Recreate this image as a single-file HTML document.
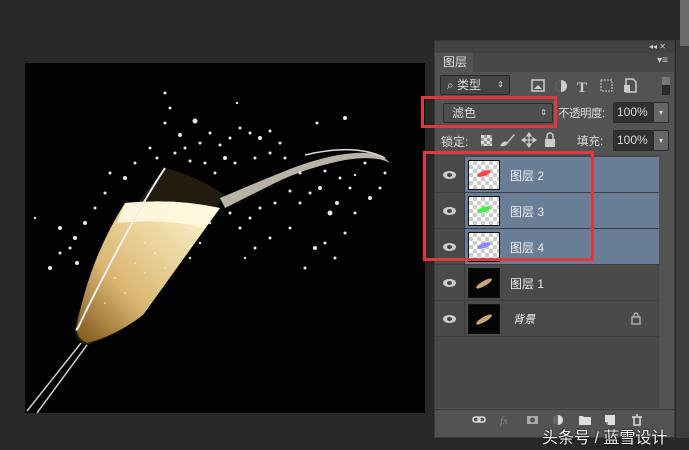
<!DOCTYPE html>
<html><head><meta charset="utf-8"><style>
*{margin:0;padding:0;box-sizing:border-box}
body{width:689px;height:450px;background:#282828;position:relative;overflow:hidden;font-family:"Liberation Sans","Noto Sans CJK SC",sans-serif;color:#ddd;font-size:12px}
.abs{position:absolute}
.canvas{left:25px;top:63px;width:400px;height:350px;background:#020202;overflow:hidden}
.panel{left:434px;top:40px;width:241px;height:398px;background:#535353;border:1px solid #3a3a3a}
.row{position:absolute;left:0;width:224px;height:36px;border-bottom:1px solid #3e3e3e;background:#4a4a4a}
.row.sel{background:#6a7d97}
.eye{position:absolute;left:0;top:0;width:30px;height:35px;border-right:1px solid #3c3c3c;background:#4a4a4a}
.eye:after{content:"";position:absolute;left:8px;top:14px;width:13px;height:8px;border-radius:50%;background:#ccc}
.eye:before{content:"";position:absolute;left:12px;top:16px;width:5px;height:4px;border-radius:50%;background:#444;z-index:2}
.th{position:absolute;left:33px;top:3px;width:32px;height:30px;border:1px solid #111;background-color:#fff;background-image:linear-gradient(45deg,#ccc 25%,transparent 25%,transparent 75%,#ccc 75%),linear-gradient(45deg,#ccc 25%,transparent 25%,transparent 75%,#ccc 75%);background-size:8px 8px;background-position:0 0,4px 4px}
.th.dark{background:#050505}
.nm{position:absolute;left:75px;top:10px;color:#eee;font-size:12px}
.red{position:absolute;border:3px solid #e0393b}
.btn{position:absolute;background:#3a3a3a;border:1px solid #2a2a2a;border-radius:2px;color:#ddd}
</style></head><body>
<div class="abs canvas">
<svg width="400" height="350">
<defs><linearGradient id="g" x1="0" y1="1" x2="1" y2="0"><stop offset="0" stop-color="#7a5418"/><stop offset=".35" stop-color="#d9b570"/><stop offset=".8" stop-color="#f6e6b8"/><stop offset="1" stop-color="#fffbe8"/></linearGradient></defs>
<path d="M140 105 Q170 112 200 132 L120 250 Q95 272 62 282 Q48 278 50 262 Q70 190 140 105Z" fill="#3a2d1a" opacity=".6"/>
<path d="M100 140 Q150 135 195 145 L118 252 Q92 272 62 280 Q50 275 52 262 Q65 195 100 140Z" fill="url(#g)"/>
<path d="M100 140 Q150 135 195 145 L180 165 Q140 155 92 160Z" fill="#fff8e0" opacity=".9"/>
<path d="M140 105 Q110 150 60 250 Q50 272 52 265" stroke="#eee" stroke-width="2" fill="none"/>
<path d="M56 280 L2 348 M62 282 L12 350" stroke="#ccc" stroke-width="1.5"/>
<path d="M195 135 Q230 120 260 108 Q300 92 330 90 Q355 88 365 100 Q350 92 320 97 Q280 105 250 120 Q220 135 200 145Z" fill="#e6e0d0" opacity=".8"/>
<path d="M280 92 Q330 80 360 95" stroke="#ddd" stroke-width="1.5" fill="none"/>
<g fill="#e8e8e8">
<circle cx="140" cy="30" r="1.5"/><circle cx="145" cy="45" r="1.5"/><circle cx="170" cy="58" r="2.5"/><circle cx="155" cy="72" r="2"/><circle cx="140" cy="60" r="1.5"/><circle cx="125" cy="85" r="1.5"/><circle cx="132" cy="95" r="1.5"/><circle cx="110" cy="100" r="1.5"/><circle cx="100" cy="115" r="2"/><circle cx="85" cy="110" r="1.5"/><circle cx="80" cy="130" r="1.5"/><circle cx="70" cy="145" r="1.5"/><circle cx="60" cy="160" r="2"/><circle cx="50" cy="175" r="2"/><circle cx="35" cy="165" r="2"/><circle cx="25" cy="205" r="2"/><circle cx="35" cy="190" r="1.5"/><circle cx="10" cy="155" r="1.2"/><circle cx="52" cy="200" r="2"/><circle cx="45" cy="185" r="1.5"/>
<circle cx="160" cy="85" r="1.5"/><circle cx="175" cy="80" r="1.5"/><circle cx="185" cy="70" r="1.5"/><circle cx="195" cy="82" r="1.5"/><circle cx="205" cy="75" r="1.5"/><circle cx="215" cy="65" r="1.5"/><circle cx="225" cy="70" r="1.5"/><circle cx="235" cy="75" r="2"/><circle cx="245" cy="68" r="1.5"/><circle cx="255" cy="80" r="1.5"/><circle cx="200" cy="95" r="2"/><circle cx="180" cy="100" r="1.5"/><circle cx="165" cy="98" r="1.5"/><circle cx="150" cy="90" r="1.5"/><circle cx="190" cy="110" r="1.5"/><circle cx="210" cy="100" r="1.5"/><circle cx="230" cy="95" r="1.5"/><circle cx="245" cy="90" r="1.5"/><circle cx="260" cy="95" r="1.5"/><circle cx="292" cy="60" r="1.5"/><circle cx="320" cy="55" r="2"/><circle cx="212" cy="40" r="1.2"/>
<circle cx="205" cy="150" r="1.5"/><circle cx="215" cy="165" r="1.5"/><circle cx="225" cy="155" r="1.5"/><circle cx="235" cy="145" r="1.5"/><circle cx="250" cy="140" r="1.5"/><circle cx="265" cy="128" r="1.5"/><circle cx="275" cy="140" r="1.5"/><circle cx="285" cy="130" r="1.5"/><circle cx="295" cy="125" r="2"/><circle cx="305" cy="150" r="2.5"/><circle cx="312" cy="140" r="2"/><circle cx="325" cy="125" r="1.5"/><circle cx="330" cy="150" r="1.5"/><circle cx="345" cy="135" r="2"/><circle cx="355" cy="125" r="1.5"/><circle cx="360" cy="110" r="1.5"/><circle cx="300" cy="180" r="1.5"/><circle cx="310" cy="195" r="1.5"/><circle cx="280" cy="205" r="1.5"/><circle cx="290" cy="185" r="2"/><circle cx="320" cy="170" r="1.5"/><circle cx="265" cy="165" r="1.5"/><circle cx="245" cy="175" r="1.5"/><circle cx="230" cy="185" r="1.5"/><circle cx="220" cy="195" r="1.2"/><circle cx="275" cy="110" r="1.5"/><circle cx="300" cy="108" r="1.5"/><circle cx="315" cy="115" r="1.5"/><circle cx="340" cy="100" r="1.5"/><circle cx="330" cy="112" r="1.2"/>
<circle cx="185" cy="160" r="1.2"/><circle cx="175" cy="180" r="1.2"/><circle cx="165" cy="195" r="1.2"/>
</g>
<g fill="#fff" opacity=".5"><circle cx="110" cy="200" r="1"/><circle cx="120" cy="210" r="1"/><circle cx="130" cy="190" r="1"/><circle cx="100" cy="230" r="1"/><circle cx="140" cy="205" r="1"/><circle cx="90" cy="215" r="1"/><circle cx="120" cy="180" r="1"/><circle cx="80" cy="240" r="1"/></g>
</svg>
</div>
<div class="abs" style="left:676px;top:40px;width:13px;height:398px;background:#3c3c3c"></div>
<div class="abs" style="left:680px;top:0;width:9px;height:46px;background:#6a6a6a"></div>
<div class="abs panel">
<div class="abs" style="left:0;top:0;width:239px;height:12px;background:#424242;color:#ccc;font-size:8px;text-align:right;padding-right:8px;line-height:12px">◂◂ ✕</div>
<div class="abs" style="left:0;top:12px;width:239px;height:19px;background:#474747"></div>
<div class="abs" style="left:0;top:12px;width:38px;height:19px;background:#535353;font-size:12px;line-height:19px;padding-left:8px;color:#ddd">图层</div>
<div class="abs" style="right:6px;top:14px;font-size:10px;color:#ccc">▾≡</div>
<div class="btn" style="left:5px;top:34px;width:70px;height:20px;line-height:18px;padding-left:6px;background:#444">⌕ 类型<span style="position:absolute;right:5px;font-size:8px">⇕</span></div>
<svg class="abs" style="left:96px;top:36px" width="115" height="18">
<rect x="1" y="3" width="12" height="11" fill="none" stroke="#ccc" stroke-width="1.5"/><path d="M3 12 L7 8 L11 12Z" fill="#ccc"/>
<circle cx="30" cy="9" r="6" fill="#ccc"/><path d="M30 3 A6 6 0 0 0 30 15Z" fill="#555"/>
<text x="46" y="15" fill="#ccc" font-size="15" font-family="Liberation Serif" font-weight="bold">T</text>
<rect x="70" y="3" width="11" height="11" fill="none" stroke="#ccc" stroke-dasharray="2 1"/>
<path d="M95 2 L102 2 L105 5 L105 15 L95 15Z" fill="none" stroke="#ccc" stroke-width="1.5"/><rect x="93" y="8" width="6" height="7" fill="#ccc"/>
</svg>
<div class="abs" style="left:227px;top:36px;width:8px;height:18px;background:#2a2a2a"><div style="height:8px;background:#777"></div></div>
<div class="btn" style="left:8px;top:62px;width:110px;height:20px;line-height:18px;padding-left:8px;background:#4e4e4e">滤色<span style="position:absolute;right:5px;font-size:8px">⇕</span></div>
<div class="abs" style="left:123px;top:64px;color:#ddd;font-size:11.5px;letter-spacing:-0.5px">不透明度:</div>
<div class="btn" style="left:178px;top:61px;width:40px;height:21px;line-height:19px;padding-left:3px;background:#303030">100%</div>
<div class="btn" style="left:218px;top:61px;width:16px;height:21px;background:#666;font-size:8px;text-align:center;line-height:19px">▾</div>
<div class="abs" style="left:6px;top:92px;color:#ddd">锁定:</div>
<div class="abs" style="left:46px;top:94px;width:11px;height:11px;background-image:linear-gradient(45deg,#999 25%,transparent 25%,transparent 75%,#999 75%),linear-gradient(45deg,#999 25%,transparent 25%,transparent 75%,#999 75%);background-size:6px 6px;background-position:0 0,3px 3px;background-color:#ddd"></div>
<svg class="abs" style="left:64px;top:91px" width="60" height="16">
<path d="M1 14 Q4 8 8 10 L15 2 L16 3 L9 11 Q7 15 1 14Z" fill="#ccc"/>
<path d="M30 2 V14 M24 8 H36 M30 1 L28 4 H32Z M30 15 L28 12 H32Z M23 8 L26 6 V10Z M37 8 L34 6 V10Z" stroke="#ccc" fill="#ccc" stroke-width="1.2"/>
<rect x="46" y="7" width="10" height="8" fill="#ccc"/><path d="M48 7 V4 A3 3 0 0 1 54 4 V7" stroke="#ccc" stroke-width="1.5" fill="none"/>
</svg>
<div class="abs" style="left:142px;top:92px;color:#ddd;font-size:11.5px">填充:</div>
<div class="btn" style="left:178px;top:89px;width:40px;height:21px;line-height:19px;padding-left:3px;background:#303030">100%</div>
<div class="btn" style="left:218px;top:89px;width:16px;height:21px;background:#666;font-size:8px;text-align:center;line-height:19px">▾</div>
<div class="abs" style="left:0;top:114px;width:224px;height:253px;background:#484848">
<div class="row sel" style="top:2px"><div class="eye"></div><div class="th"><div style="position:absolute;left:8px;top:10px;width:14px;height:5px;background:#f44;border-radius:50%;transform:rotate(-20deg)"></div></div><div class="nm">图层 2</div></div>
<div class="row sel" style="top:38px"><div class="eye"></div><div class="th"><div style="position:absolute;left:8px;top:10px;width:14px;height:5px;background:#4e4;border-radius:50%;transform:rotate(-20deg)"></div></div><div class="nm">图层 3</div></div>
<div class="row sel" style="top:74px"><div class="eye"></div><div class="th"><div style="position:absolute;left:8px;top:10px;width:14px;height:5px;background:#88f;border-radius:50%;transform:rotate(-20deg)"></div></div><div class="nm">图层 4</div></div>
<div class="row" style="top:110px"><div class="eye"></div><div class="th dark"><div style="position:absolute;left:6px;top:12px;width:18px;height:5px;background:#c9a774;border-radius:50%;transform:rotate(-30deg)"></div></div><div class="nm">图层 1</div></div>
<div class="row" style="top:146px"><div class="eye"></div><div class="th dark"><div style="position:absolute;left:6px;top:12px;width:18px;height:5px;background:#c9a774;border-radius:50%;transform:rotate(-30deg)"></div></div><div class="nm" style="left:78px;font-style:italic;font-size:11px">背景</div>
<svg style="position:absolute;left:196px;top:11px" width="10" height="13"><rect x="1" y="5" width="8" height="7" fill="none" stroke="#bbb" stroke-width="1.3"/><path d="M3 5 V3 A2 2 0 0 1 7 3 V5" stroke="#bbb" fill="none" stroke-width="1.3"/></svg></div>
</div>
<div class="abs" style="left:0;top:368px;width:239px;height:20px;background:#535353;border-top:1px solid #3a3a3a"></div>
<svg class="abs" style="left:36px;top:372px" width="180" height="14">
<rect x="2" y="4" width="7" height="5" rx="2.5" fill="none" stroke="#ddd" stroke-width="1.6"/><rect x="7" y="4" width="7" height="5" rx="2.5" fill="none" stroke="#ddd" stroke-width="1.6"/>
<text x="29" y="11" fill="#888" font-size="11" font-style="italic" font-family="Liberation Serif">fx</text>
<rect x="56" y="3" width="11" height="8" fill="#aaa"/><circle cx="61.5" cy="7" r="2.5" fill="#555"/>
<circle cx="87" cy="7" r="5" fill="#ddd"/><path d="M87 2 A5 5 0 0 0 87 12Z" fill="#666"/>
<path d="M108 3 H112 L113 4 H120 V12 H108Z" fill="#ddd"/>
<path d="M134 2 H144 V12 H137 L134 9Z" fill="#ddd"/><path d="M134 9 H137 V12" fill="#888"/>
<path d="M161 4 H171 M163 4 V12 H169 V4 M165 2 H167" stroke="#ddd" stroke-width="1.5" fill="none"/>
</svg>
</div>
<div class="red" style="left:421px;top:96px;width:136px;height:32px"></div>
<div class="red" style="left:423px;top:151px;width:171px;height:110px"></div>
<div class="abs" style="left:542px;top:424px;color:#f4f4f4;font-size:16px;text-shadow:0 0 2px #000">头条号 / 蓝雪设计</div>
</body></html>
